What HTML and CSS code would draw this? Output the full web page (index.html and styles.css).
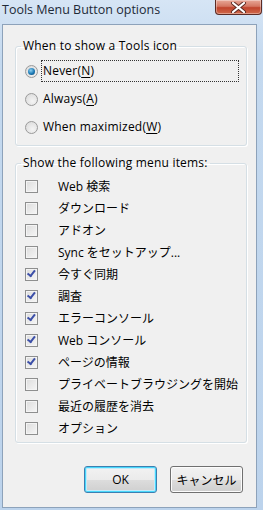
FILE: index.html
```html
<!DOCTYPE html>
<html lang="ja">
<head>
    <meta charset="UTF-8">
    <title>Tools Menu Button options</title>
    <link rel="stylesheet" href="styles.css">
</head>
<body>
<div class="window">
    <div class="titlebar">
        <span class="title">Tools Menu Button options</span>
        <span class="close">
            <svg width="17" height="11" viewBox="0 0 17 11">
                <path d="M3 1 L14 10 M14 1 L3 10" stroke="#5a2a22" stroke-width="4" stroke-linecap="round"/>
                <path d="M3 1 L14 10 M14 1 L3 10" stroke="#fff" stroke-width="2.2" stroke-linecap="round"/>
            </svg>
        </span>
    </div>
    <div class="client">
        <fieldset class="group group-show">
            <legend>When to show a Tools icon</legend>
            <div class="row">
                <span class="radio checked"></span>
                <span class="label focus">Never(<u>N</u>)</span>
            </div>
            <div class="row">
                <span class="radio"></span>
                <span class="label">Always(<u>A</u>)</span>
            </div>
            <div class="row">
                <span class="radio"></span>
                <span class="label">When maximized(<u>W</u>)</span>
            </div>
        </fieldset>

        <fieldset class="group group-items">
            <legend>Show the following menu items:</legend>
            <div class="item"><span class="check"></span><span>Web 検索</span></div>
            <div class="item"><span class="check"></span><span>ダウンロード</span></div>
            <div class="item"><span class="check"></span><span>アドオン</span></div>
            <div class="item"><span class="check"></span><span>Sync をセットアップ...</span></div>
            <div class="item"><span class="check on"></span><span>今すぐ同期</span></div>
            <div class="item"><span class="check on"></span><span>調査</span></div>
            <div class="item"><span class="check on"></span><span>エラーコンソール</span></div>
            <div class="item"><span class="check on"></span><span>Web コンソール</span></div>
            <div class="item"><span class="check on"></span><span>ページの情報</span></div>
            <div class="item"><span class="check"></span><span>プライベートブラウジングを開始</span></div>
            <div class="item"><span class="check"></span><span>最近の履歴を消去</span></div>
            <div class="item"><span class="check"></span><span>オプション</span></div>
        </fieldset>

        <div class="buttons">
            <button class="btn default">OK</button>
            <button class="btn">キャンセル</button>
        </div>
    </div>
</div>
</body>
</html>
```

FILE: styles.css
```css
html, body {
    margin: 0;
    padding: 0;
}

body {
    font-family: "Open Sans", "Noto Sans CJK JP", sans-serif;
    font-size: 12px;
    color: #000;
    background: #c6daef;
}

.window {
    width: 263px;
    height: 510px;
    display: flex;
    flex-direction: column;
    background: linear-gradient(#d6e5f5, #c4d9ef 60px, #bcd3ec);
}

.titlebar {
    height: 24px;
    display: flex;
    justify-content: space-between;
    align-items: flex-start;
}

.title {
    padding: 1px 0 0 2px;
    line-height: 18px;
    font-size: 12.5px;
    color: #1e2a38;
}

.close {
    width: 45px;
    height: 14px;
    margin-right: 1px;
    border: 1px solid #5b2b24;
    border-top: none;
    border-radius: 0 0 4px 4px;
    background: linear-gradient(#e8a898, #d47762 45%, #c0442c 55%, #d06a4c);
    box-shadow: inset 0 0 0 1px rgba(255,255,255,0.35);
    display: flex;
    align-items: center;
    justify-content: center;
}

.client {
    margin: 0 6px 2px 2px;
    flex: 1;
    background: #f0f0f0;
    border: 1px solid #8da2ba;
    padding: 13px 0 0 12px;
}

.group {
    width: 230px;
    margin: 0;
    padding: 3px 0 4px 0;
    border: 1px solid #d5dfe5;
    border-radius: 3px;
    box-shadow: inset 1px 1px 0 #fff, 1px 1px 0 #fff;
}

.group legend {
    padding: 0 2px;
    margin-left: 5px;
    line-height: 16px;
    letter-spacing: 0.2px;
}

.group-items {
    margin-top: 9px;
    padding: 4px 0 3px 0;
}

.row {
    height: 28px;
    display: flex;
    align-items: center;
    padding-left: 9px;
}

.radio {
    width: 11px;
    height: 11px;
    border: 1px solid #9a9a9a;
    border-radius: 50%;
    background: radial-gradient(circle at 60% 65%, #f4f4f4, #d8d8d8);
    flex-shrink: 0;
    display: flex;
    align-items: center;
    justify-content: center;
}

.radio.checked::after {
    content: "";
    width: 7px;
    height: 7px;
    border-radius: 50%;
    background: radial-gradient(circle at 40% 35%, #8fd0f0, #1a78b4 55%, #103f66);
}

.label {
    margin-left: 3px;
    padding: 0 2px 1px 2px;
    line-height: 19px;
    letter-spacing: 0.2px;
}

.label.focus {
    flex: 1;
    margin-right: 7px;
    border: 1px dotted #333;
    padding-left: 1px;
}

.label u {
    text-decoration-thickness: 1px;
    text-underline-offset: 2px;
}

.item {
    height: 22px;
    display: flex;
    align-items: center;
    padding-left: 9px;
}

.check {
    width: 11px;
    height: 11px;
    border: 1px solid #8e8f8f;
    background: linear-gradient(135deg, #dcdcdc, #f6f6f6);
    box-shadow: inset 0 0 0 1px #f4f4f4;
    margin-right: 20px;
    flex-shrink: 0;
    display: flex;
    align-items: center;
    justify-content: center;
}

.check.on::after {
    content: "";
    width: 3px;
    height: 6px;
    border-right: 2px solid #3c4fa8;
    border-bottom: 2px solid #3c4fa8;
    transform: rotate(38deg) translate(-1px, -1px);
}

.buttons {
    display: flex;
    justify-content: flex-end;
    gap: 13px;
    margin-top: 23px;
    padding-right: 13px;
}

.btn {
    font-family: "Open Sans", "Noto Sans CJK JP", sans-serif;
    font-size: 12px;
    height: 27px;
    width: 73px;
    border: 1px solid #707070;
    border-radius: 3px;
    background: linear-gradient(#f2f2f2, #ebebeb 50%, #dddddd 50%, #cfcfcf);
    box-shadow: inset 0 0 0 1px #fcfcfc;
    color: #000;
    padding: 0;
}

.btn.default {
    border-color: #3c7fb1;
    box-shadow: inset 0 0 0 1px #48d8fb, inset 0 0 0 2px #c3eafb;
}
```
